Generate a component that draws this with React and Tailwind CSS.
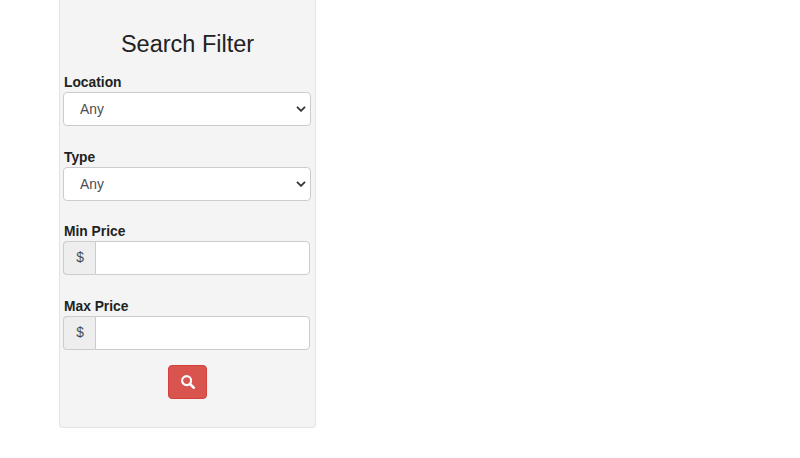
import { useState } from 'react';

const selects = [
  { id: 'location', label: 'Location', options: ['Any'], className: 'h-[75px]' },
  { id: 'type', label: 'Type', options: ['Any'], className: 'h-[74px]' },
];

const prices = [
  { id: 'minPrice', label: 'Min Price', className: 'h-[75px]' },
  { id: 'maxPrice', label: 'Max Price', className: 'h-[74px]' },
];

function SelectField({ field, value, onChange }) {
  return (
    <div className={field.className}>
      <label htmlFor={field.id} className="block h-5 pl-px text-[13.8px] leading-[21px] font-bold text-[#222]">
        {field.label}
      </label>
      <div className="relative h-[34px] w-[248px]">
        <select
          id={field.id}
          value={value}
          onChange={(e) => onChange(field.id, e.target.value)}
          className="h-full w-full appearance-none rounded border border-[#ccc] bg-white pt-[2px] pl-4 text-[13.8px] text-[#4c4c4c]"
        >
          {field.options.map((option) => (
            <option key={option}>{option}</option>
          ))}
        </select>
        <svg
          viewBox="0 0 10 6"
          className="pointer-events-none absolute top-[14px] right-[5px] h-[6px] w-[10px]"
          fill="none"
          stroke="#333"
          strokeWidth="1.8"
        >
          <path d="M1 0.8 L5 4.8 L9 0.8" />
        </svg>
      </div>
    </div>
  );
}

function PriceField({ field, value, onChange }) {
  return (
    <div className={field.className}>
      <label htmlFor={field.id} className="block h-5 pl-px text-[13.8px] leading-[22px] font-bold text-[#222]">
        {field.label}
      </label>
      <div className="flex h-[34px] w-[247px]">
        <span className="flex w-8 items-center justify-center rounded-l border border-r-0 border-[#ccc] bg-[#eee] pl-px text-[13.8px] text-[#4c4c4c]">
          $
        </span>
        <input
          id={field.id}
          type="text"
          value={value}
          onChange={(e) => onChange(field.id, e.target.value)}
          className="min-w-0 flex-1 rounded-r border border-[#ccc] bg-white px-3 text-[13.8px] text-[#4c4c4c]"
        />
      </div>
    </div>
  );
}

function App() {
  const [filters, setFilters] = useState({ location: 'Any', type: 'Any', minPrice: '', maxPrice: '' });

  const handleChange = (id, value) => {
    setFilters({ ...filters, [id]: value });
  };

  return (
    <div className="h-[458px] overflow-hidden bg-white font-['Liberation_Sans',Arial,sans-serif]">
      <form
        onSubmit={(e) => e.preventDefault()}
        className="ml-[59px] h-[428px] w-[257px] rounded-b border border-t-0 border-[#e3e3e3] bg-[#f4f4f4] px-[3px] pt-[30px]"
      >
        <h3 className="mb-[14px] text-center text-[23.5px] leading-[28px] text-[#222]">Search Filter</h3>
        {selects.map((field) => (
          <SelectField key={field.id} field={field} value={filters[field.id]} onChange={handleChange} />
        ))}
        {prices.map((field) => (
          <PriceField key={field.id} field={field} value={filters[field.id]} onChange={handleChange} />
        ))}
        <button
          type="submit"
          aria-label="Search"
          className="mx-auto -mt-[5px] flex h-[34px] w-[39px] items-center justify-center rounded border border-[#d43f3a] bg-[#d9534f]"
        >
          <svg viewBox="0 0 14 14" className="h-[14px] w-[14px]" fill="none" stroke="#fff">
            <circle cx="5.6" cy="5.6" r="4.5" strokeWidth="2.1" />
            <path d="M9 9 L12.7 12.7" strokeWidth="2.6" strokeLinecap="round" />
          </svg>
        </button>
      </form>
    </div>
  );
}

export default App;
